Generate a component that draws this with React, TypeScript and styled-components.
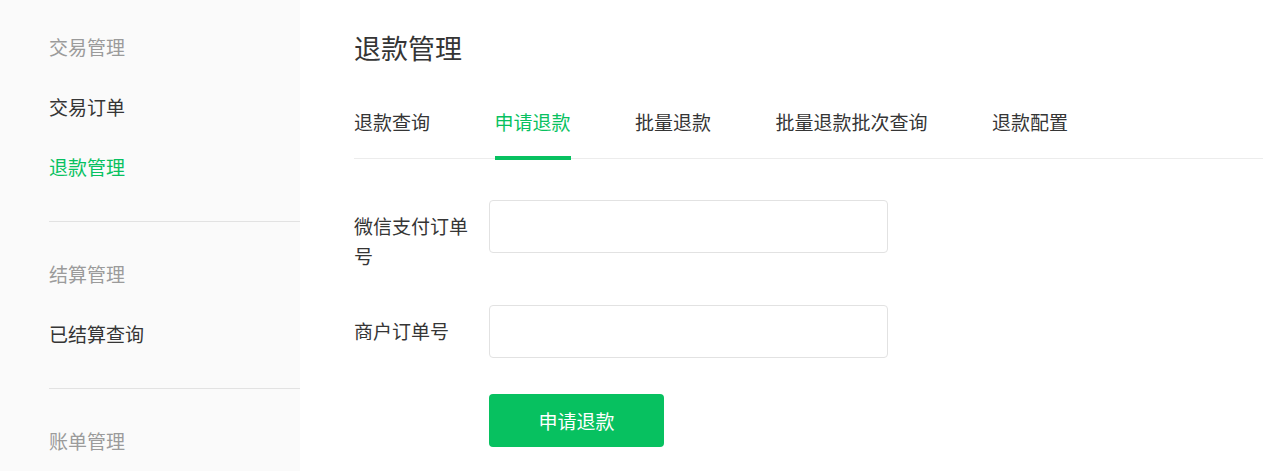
import React, { useState } from "react";
import styled, { createGlobalStyle } from "styled-components";

const GREEN = "#07c160";
const TEXT = "#353535";

const GlobalStyle = createGlobalStyle`
  html, body {
    margin: 0;
    padding: 0;
    background: #fff;
  }
  body {
    font-family: "Microsoft YaHei", "Noto Sans CJK SC", "Noto Sans", sans-serif;
    color: ${TEXT};
  }
  * {
    box-sizing: border-box;
  }
`;

const Layout = styled.div`
  display: flex;
  min-height: 100vh;
`;

const Sidebar = styled.nav`
  width: 300px;
  flex-shrink: 0;
  background: #fafafa;
  padding: 17px 0 0 49px;
`;

const MenuGroup = styled.div`
  padding-bottom: 24px;
  margin-bottom: 22px;
  border-bottom: 1px solid #e2e2e2;

  &:last-child {
    border-bottom: none;
    margin-bottom: 0;
    padding-bottom: 0;
  }
`;

const MenuTitle = styled.div`
  height: 60px;
  line-height: 60px;
  font-size: 19px;
  color: #9b9b9b;
`;

const MenuItem = styled.a<{ $active?: boolean }>`
  display: block;
  height: 60px;
  line-height: 60px;
  font-size: 19px;
  color: ${(p) => (p.$active ? GREEN : TEXT)};
  text-decoration: none;
  cursor: pointer;
`;

const Main = styled.main`
  flex: 1;
  padding: 30px 0 0 54px;
`;

const PageTitle = styled.h1`
  margin: 0;
  font-size: 27px;
  line-height: 36px;
  font-weight: 400;
  color: ${TEXT};
`;

const TabBar = styled.div`
  display: flex;
  gap: 64.5px;
  margin-top: 20px;
  border-bottom: 1px solid #ececec;
`;

const Tab = styled.div<{ $active?: boolean }>`
  position: relative;
  height: 72px;
  line-height: 72px;
  font-size: 19px;
  white-space: nowrap;
  cursor: pointer;
  color: ${(p) => (p.$active ? GREEN : TEXT)};

  &::after {
    content: "";
    display: ${(p) => (p.$active ? "block" : "none")};
    position: absolute;
    left: 0;
    right: 0;
    bottom: -2px;
    height: 4px;
    background: ${GREEN};
  }
`;

const Form = styled.form`
  margin-top: 41px;
`;

const FormRow = styled.div`
  display: flex;
  align-items: flex-start;
  margin-bottom: 34px;
`;

const Label = styled.label`
  width: 120px;
  margin-right: 15px;
  padding-top: 11px;
  font-size: 19px;
  line-height: 30px;
  color: ${TEXT};
`;

const Input = styled.input`
  width: 399px;
  height: 53px;
  padding: 0 14px;
  border: 1px solid #e2e2e2;
  border-radius: 4px;
  font-size: 17px;
  font-family: inherit;
  color: ${TEXT};
  outline: none;

  &:focus {
    border-color: ${GREEN};
  }
`;

const SubmitButton = styled.button`
  margin: 2px 0 0 135px;
  width: 175px;
  height: 53px;
  border: none;
  border-radius: 4px;
  background: ${GREEN};
  color: #fff;
  font-size: 19px;
  font-family: inherit;
  cursor: pointer;
`;

const menu = [
  { title: "交易管理", items: ["交易订单", "退款管理"] },
  { title: "结算管理", items: ["已结算查询"] },
  { title: "账单管理", items: [] as string[] },
];

const tabs = ["退款查询", "申请退款", "批量退款", "批量退款批次查询", "退款配置"];

export default function App() {
  const [activeTab, setActiveTab] = useState(1);
  const [wxOrder, setWxOrder] = useState("");
  const [mchOrder, setMchOrder] = useState("");

  return (
    <>
      <GlobalStyle />
      <Layout>
        <Sidebar>
          {menu.map((group) => (
            <MenuGroup key={group.title}>
              <MenuTitle>{group.title}</MenuTitle>
              {group.items.map((item) => (
                <MenuItem key={item} $active={item === "退款管理"}>
                  {item}
                </MenuItem>
              ))}
            </MenuGroup>
          ))}
        </Sidebar>
        <Main>
          <PageTitle>退款管理</PageTitle>
          <TabBar>
            {tabs.map((tab, i) => (
              <Tab
                key={tab}
                $active={i === activeTab}
                onClick={() => setActiveTab(i)}
              >
                {tab}
              </Tab>
            ))}
          </TabBar>
          <Form onSubmit={(e) => e.preventDefault()}>
            <FormRow>
              <Label htmlFor="wx-order">微信支付订单号</Label>
              <Input
                id="wx-order"
                value={wxOrder}
                onChange={(e) => setWxOrder(e.target.value)}
              />
            </FormRow>
            <FormRow>
              <Label htmlFor="mch-order">商户订单号</Label>
              <Input
                id="mch-order"
                value={mchOrder}
                onChange={(e) => setMchOrder(e.target.value)}
              />
            </FormRow>
            <SubmitButton type="submit">申请退款</SubmitButton>
          </Form>
        </Main>
      </Layout>
    </>
  );
}
